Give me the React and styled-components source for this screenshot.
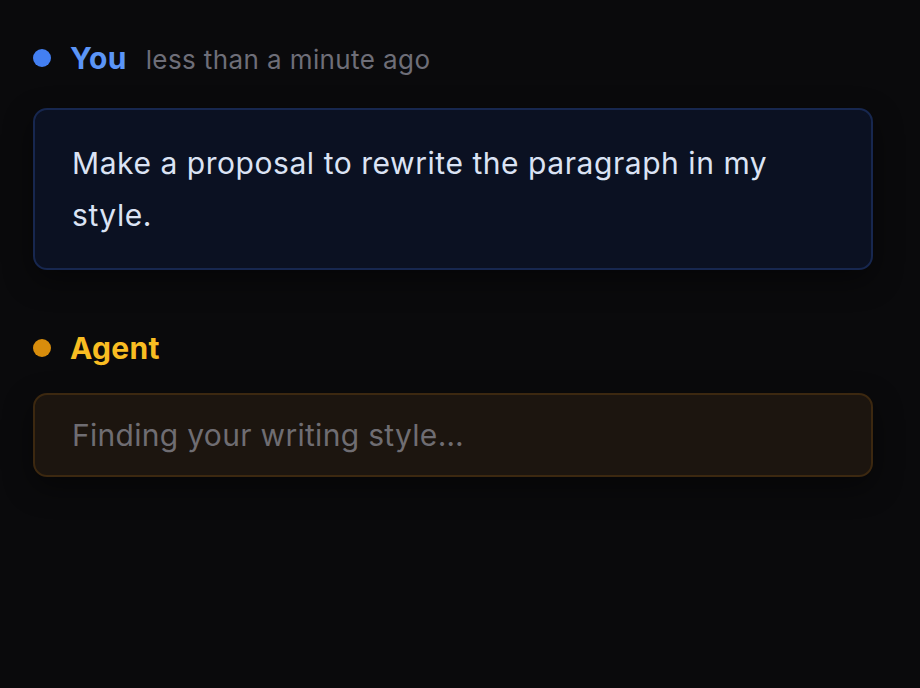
import React from "react";
import styled, { createGlobalStyle } from "styled-components";

const colors = {
  page: "#0a0a0c",
  muted: "#6e6e78",
  you: "#5b95f7",
  youDot: "#437ff2",
  agent: "#f9bd22",
  agentDot: "#d88d0c",
};

const GlobalStyle = createGlobalStyle`
  html, body {
    margin: 0;
    padding: 0;
    background: ${colors.page};
  }
  body {
    font-family: Inter, "Noto Sans", sans-serif;
    -webkit-font-smoothing: antialiased;
  }
`;

const Page = styled.div`
  min-height: 688px;
  box-sizing: border-box;
  padding: 36px 47px 0 33px;
  display: flex;
  flex-direction: column;
`;

const Message = styled.div`
  display: flex;
  flex-direction: column;
  margin-bottom: ${(p) => p.$spacing || 0}px;
`;

const Header = styled.div`
  display: flex;
  align-items: center;
  height: 44px;
  margin-bottom: ${(p) => p.$gap}px;
`;

const Dot = styled.span`
  width: 18px;
  height: 18px;
  border-radius: 50%;
  background: ${(p) => p.$color};
  margin-right: 19px;
  flex-shrink: 0;
`;

const Author = styled.span`
  font-size: 30px;
  font-weight: 700;
  color: ${(p) => p.$color};
  letter-spacing: 0.3px;
`;

const Time = styled.span`
  margin-left: 19px;
  font-size: 26px;
  letter-spacing: 0.4px;
  color: ${colors.muted};
  padding-top: 2px;
`;

const Bubble = styled.div`
  border-radius: 14px;
  border: 2px solid ${(p) => p.$border};
  background: ${(p) => p.$bg};
  padding: ${(p) => p.$padY}px 37px;
  font-size: 30px;
  letter-spacing: ${(p) => p.$spacing}px;
  line-height: 52px;
  color: ${(p) => p.$color};
  box-shadow: 0 10px 30px rgba(0, 0, 0, 0.45);
`;

export default function App() {
  return (
    <>
      <GlobalStyle />
      <Page>
        <Message $spacing={56}>
          <Header $gap={28}>
            <Dot $color={colors.youDot} />
            <Author $color={colors.you}>You</Author>
            <Time>less than a minute ago</Time>
          </Header>
          <Bubble
            $border="#17274f"
            $bg="#0b1122"
            $color="#dbe3f4"
            $padY={27}
            $spacing={0.55}
          >
            Make a proposal to rewrite the paragraph in my style.
          </Bubble>
        </Message>
        <Message>
          <Header $gap={23}>
            <Dot $color={colors.agentDot} />
            <Author $color={colors.agent}>Agent</Author>
          </Header>
          <Bubble
            $border="#3c2810"
            $bg="#1c150f"
            $color="#6f6d72"
            $padY={14}
            $spacing={0.3}
          >
            Finding your writing style…
          </Bubble>
        </Message>
      </Page>
    </>
  );
}
